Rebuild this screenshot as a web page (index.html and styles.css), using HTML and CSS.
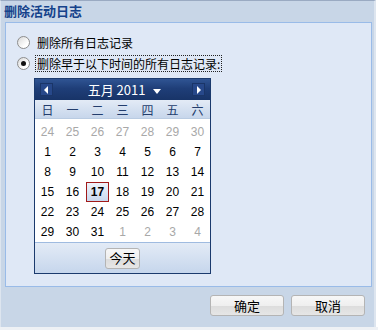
FILE: index.html
```html
<!DOCTYPE html>
<html lang="zh-CN">
<head>
    <meta charset="UTF-8">
    <title>删除活动日志</title>
    <link rel="stylesheet" href="styles.css">
</head>
<body>
    <div class="dialog">
        <div class="title">删除活动日志</div>
        <div class="panel">
            <label class="option">
                <span class="radio"></span>
                <span class="label">删除所有日志记录</span>
            </label>
            <label class="option">
                <span class="radio checked"></span>
                <span class="label focused">删除早于以下时间的所有日志记录:</span>
            </label>

            <div class="calendar">
                <div class="cal-head">
                    <span class="nav prev"></span>
                    <span class="month">五月 2011 <span class="caret"></span></span>
                    <span class="nav next"></span>
                </div>
                <div class="weekdays">
                    <span>日</span><span>一</span><span>二</span><span>三</span><span>四</span><span>五</span><span>六</span>
                </div>
                <div class="days" id="days"></div>
                <div class="cal-foot">
                    <button class="btn today">今天</button>
                </div>
            </div>
        </div>
        <div class="actions">
            <button class="btn wide">确定</button>
            <button class="btn wide">取消</button>
        </div>
    </div>
    <div class="under"></div>

    <script>
        const days = document.getElementById('days');
        const cells = [];
        for (let d = 24; d <= 30; d++) cells.push({ n: d, other: true });
        for (let d = 1; d <= 31; d++) cells.push({ n: d });
        for (let d = 1; d <= 4; d++) cells.push({ n: d, other: true });

        cells.forEach(c => {
            const el = document.createElement('span');
            el.className = 'day';
            if (c.other) el.classList.add('other');
            if (!c.other && c.n === 17) el.classList.add('selected');
            el.textContent = c.n;
            days.appendChild(el);
        });
    </script>
</body>
</html>
```

FILE: styles.css
```css
body {
    margin: 0;
    background-color: #ffffff;
    font-family: "Noto Sans CJK SC", "Liberation Sans", sans-serif;
    font-size: 12px;
}

.dialog {
    width: 376px;
    height: 327px;
    border-top: 1px solid #9aaac2;
    background-color: #c8d6e7;
    border-right: 2px solid #dde5ef;
    box-sizing: border-box;
    border-left: 1px solid #dde5ef;
}

.title {
    height: 21px;
    padding-left: 3px;
    line-height: 19px;
    font-size: 13px;
    font-weight: bold;
    color: #15428b;
}

.panel {
    height: 265px;
    margin: 0 2px 0 4px;
    border: 1px solid #99bbe8;
    background-color: #dfe8f6;
    box-sizing: border-box;
    padding: 9px 0 0 11px;
}

.option {
    display: flex;
    align-items: center;
    gap: 5px;
    height: 21px;
    color: #000;
}

.radio {
    width: 11px;
    height: 11px;
    border: 1px solid #8d8d8d;
    border-radius: 50%;
    background: linear-gradient(135deg, #d8d8d8, #ffffff 70%);
    position: relative;
    flex: none;
}

.radio.checked::after {
    content: "";
    position: absolute;
    left: 3px;
    top: 3px;
    width: 5px;
    height: 5px;
    border-radius: 50%;
    background-color: #111;
}

.label {
    line-height: 15px;
    padding: 0 1px;
    border: 1px dotted transparent;
}

.label.focused {
    border-color: #222;
}

.calendar {
    width: 177px;
    margin: 4px 0 0 17px;
    border: 1px solid #1b3a6d;
    background-color: #ffffff;
    box-sizing: border-box;
    font-family: "Liberation Sans", "Noto Sans CJK SC", sans-serif;
}

.cal-head {
    height: 21px;
    display: flex;
    align-items: center;
    justify-content: space-between;
    padding: 0 5px;
    background: linear-gradient(#2f5493, #1f3e78 45%, #183468);
    color: #ffffff;
}

.nav {
    width: 13px;
    height: 13px;
    background-color: #27488a;
    border: 1px solid #1a3568;
    box-sizing: border-box;
    position: relative;
}

.nav::after {
    content: "";
    position: absolute;
    top: 2px;
    border-top: 4px solid transparent;
    border-bottom: 4px solid transparent;
}

.prev::after {
    left: 3px;
    border-right: 4px solid #ffffff;
}

.next::after {
    left: 4px;
    border-left: 4px solid #ffffff;
}

.month {
    font-family: "Noto Sans CJK SC", "Liberation Sans", sans-serif;
    font-size: 13px;
    margin-left: 4px;
}

.caret {
    display: inline-block;
    margin-left: 5px;
    vertical-align: middle;
    border-left: 4px solid transparent;
    border-right: 4px solid transparent;
    border-top: 5px solid #ffffff;
}

.weekdays {
    display: grid;
    grid-template-columns: repeat(7, 25px);
    height: 18px;
    align-items: center;
    background: linear-gradient(#e3ebf6, #c7d6eb);
    border-bottom: 1px solid #b9cbe2;
    color: #233d6d;
    font-family: "Noto Sans CJK SC", sans-serif;
    text-align: center;
}

.days {
    display: grid;
    grid-template-columns: repeat(7, 25px);
    grid-auto-rows: 20px;
    padding-top: 3px;
    padding-bottom: 0;
}

.day {
    display: flex;
    align-items: center;
    justify-content: center;
    color: #000;
    font-size: 12px;
}

.day.other {
    color: #a8a8a8;
}

.day.selected {
    margin: 0 1px 0 1px;
    border: 1px solid #a11a1a;
    background: linear-gradient(#eef3fa, #c9d8ee);
    font-weight: bold;
}

.cal-foot {
    height: 31px;
    border-top: 1px solid #9fbbe0;
    background: linear-gradient(#e3ebf6, #c6d6ec);
    display: flex;
    align-items: center;
    justify-content: center;
    box-sizing: border-box;
}

.btn {
    height: 21px;
    padding: 0;
    border: 1px solid #b4b4b4;
    border-radius: 3px;
    background: linear-gradient(#f7f7f7, #efefef 50%, #dcdcdc 51%, #e6e6e6);
    font-family: "Noto Sans CJK SC", sans-serif;
    font-size: 13px;
    color: #000;
    line-height: 18px;
}

.btn.today {
    width: 35px;
}

.actions {
    display: flex;
    justify-content: flex-end;
    gap: 7px;
    padding: 8px 9px 0 0;
}

.btn.wide {
    width: 74px;
}

.under {
    height: 3px;
    background-color: #eef1f5;
}
```
